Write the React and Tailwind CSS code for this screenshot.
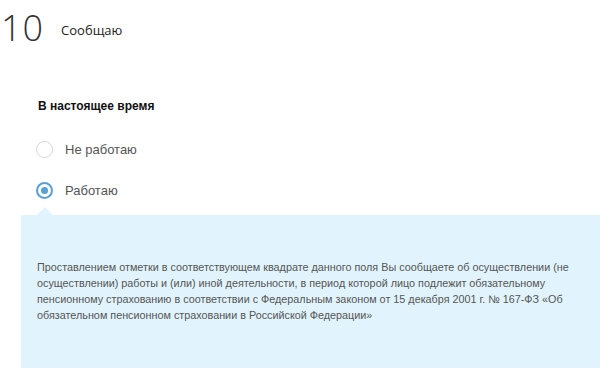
export default function App() {
  return (
    <div className="w-[600px] h-[380px] bg-white overflow-hidden font-['Liberation_Sans',Arial,sans-serif]">
      {/* header */}
      <div className="flex items-center pt-[8px] h-[48px]">
        <span className="text-[36px] leading-none font-light text-[#333] font-['Open_Sans',sans-serif] ml-[1px] tracking-[1px]">10</span>
        <span className="ml-[17px] mt-[6px] text-[13px] text-[#222] font-['Open_Sans',sans-serif]">Сообщаю</span>
      </div>

      <div className="pl-[38px] pt-[51px]">
        <div className="text-[12px] font-bold text-[#111] leading-[14px]">В настоящее время</div>

        <div className="mt-[27px] flex items-center gap-[12px] -ml-[2px]">
          <span className="w-[17px] h-[17px] rounded-full border border-[#d6d6d6] bg-white"></span>
          <span className="text-[13px] text-[#555]">Не работаю</span>
        </div>

        <div className="mt-[21px] flex items-center gap-[12px] -ml-[2px]">
          <span className="w-[17px] h-[17px] rounded-full border-2 border-[#5a9fd4] bg-white flex items-center justify-center">
            <span className="w-[7px] h-[7px] rounded-full bg-[#5a9fd4]"></span>
          </span>
          <span className="text-[13px] text-[#555]">Работаю</span>
        </div>
      </div>

      {/* info panel */}
      <div className="relative ml-[21px] mt-[15px] h-[153px] bg-[#e1f4fd] px-[16px] pt-[44px]">
        <div className="absolute -top-[8px] left-[16px] w-0 h-0 border-l-[8px] border-r-[8px] border-b-[8px] border-l-transparent border-r-transparent border-b-[#e1f4fd]"></div>
        <p className="text-[10.8px] leading-[16px] text-[#555] pr-[4px]">
          Проставлением отметки в соответствующем квадрате данного поля Вы сообщаете об осуществлении (не осуществлении) работы и (или) иной деятельности, в период которой лицо подлежит обязательному пенсионному страхованию в соответствии с Федеральным законом от 15 декабря 2001 г. № 167-ФЗ «Об обязательном пенсионном страховании в Российской Федерации»
        </p>
      </div>
    </div>
  );
}
